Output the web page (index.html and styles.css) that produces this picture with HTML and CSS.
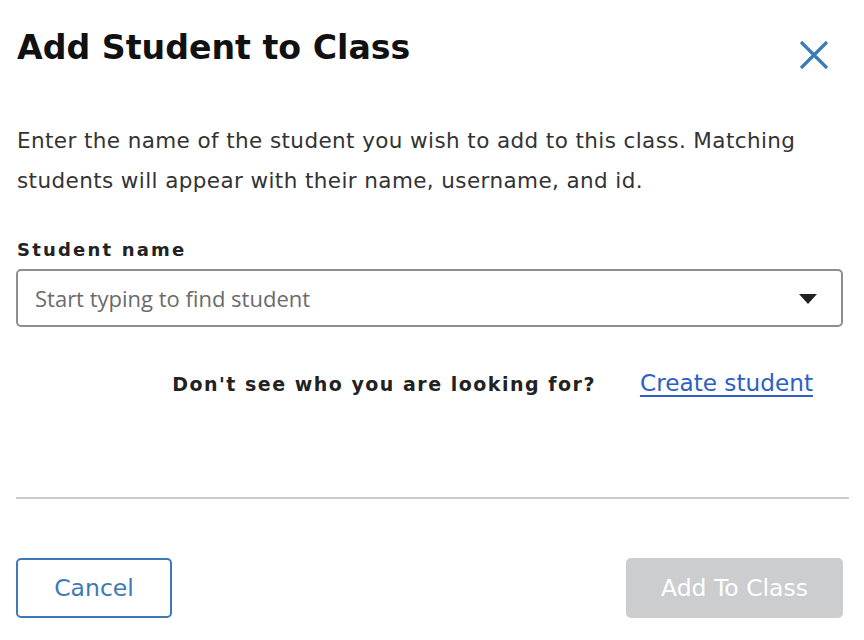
FILE: index.html
```html
<!DOCTYPE html>
<html>
<head>
<meta charset="utf-8">
<link rel="stylesheet" href="styles.css">
</head>
<body>
<div class="modal">
  <div class="header">
    <h1 class="title">Add Student to Class</h1>
    <button class="close" aria-label="Close">
      <svg width="30" height="30" viewBox="0 0 30 30"><path d="M2 2 L28 28 M28 2 L2 28" stroke="#3b7bb8" stroke-width="3.2" fill="none"/></svg>
    </button>
  </div>
  <p class="intro">Enter the name of the student you wish to add to this class. Matching students will appear with their name, username, and id.</p>
  <label class="label">Student name</label>
  <div class="select">
    <span class="placeholder">Start typing to find student</span>
    <svg class="caret" width="18" height="10" viewBox="0 0 18 10"><path d="M0 0 H18 L9 10 Z" fill="#222"/></svg>
  </div>
  <div class="help">
    <span class="help-text">Don't see who you are looking for?</span>
    <a class="link" href="#">Create student</a>
  </div>
  <hr class="divider">
  <div class="footer">
    <button class="btn btn-cancel">Cancel</button>
    <button class="btn btn-add">Add To Class</button>
  </div>
</div>
</body>
</html>
```
FILE: styles.css
```css
html, body { margin: 0; padding: 0; background: #fff; }
body { font-family: "DejaVu Sans", "Liberation Sans", sans-serif; color: #222; }
.modal { padding: 0 21px 0 16px; width: 827px; }
.header { display: flex; justify-content: space-between; align-items: flex-start; padding-top: 26px; }
.title { margin: 0 0 0 1px; font-size: 33.2px; font-weight: 700; color: #111; line-height: 44px; letter-spacing: 0; }
.close { background: none; border: 0; padding: 0; margin: 14px 14px 0 0; width: 30px; height: 30px; cursor: pointer; }
.intro { margin: 51px 0 0 1px; font-size: 21.5px; line-height: 40px; color: #333; letter-spacing: 0.4px; }
.label { display: block; margin: 36px 0 0 1px; font-size: 18px; font-weight: 700; letter-spacing: 2.2px; color: #222; line-height: 26px; }
.select { margin-top: 6px; height: 54px; border: 2px solid #8c8f91; border-radius: 5px; display: flex; align-items: center; justify-content: space-between; padding: 0 24px 0 17px; }
.placeholder { font-family: "Open Sans", sans-serif; font-size: 22px; color: #6b6b6b; }
.caret { margin-top: 2px; }
.help { display: flex; justify-content: flex-end; align-items: baseline; gap: 44px; margin-top: 42px; padding-right: 30px; }
.help-text { font-size: 19px; font-weight: 700; letter-spacing: 1.5px; color: #222; }
.link { font-size: 23.2px; color: #2d5fc4; text-decoration: underline; text-underline-offset: 4px; }
.divider { border: 0; border-top: 2px solid #cbcdcf; margin: 101px 0 0 0; width: 833px; }
.footer { display: flex; justify-content: space-between; margin-top: 59px; }
.btn { height: 60px; border-radius: 5px; font-family: "DejaVu Sans", sans-serif; font-size: 23.5px; cursor: pointer; }
.btn-cancel { width: 156px; background: #fff; border: 2px solid #3b7ab6; color: #3b7ab6; }
.btn-add { width: 217px; background: #cbcdcf; border: 0; color: #fff; }
```
